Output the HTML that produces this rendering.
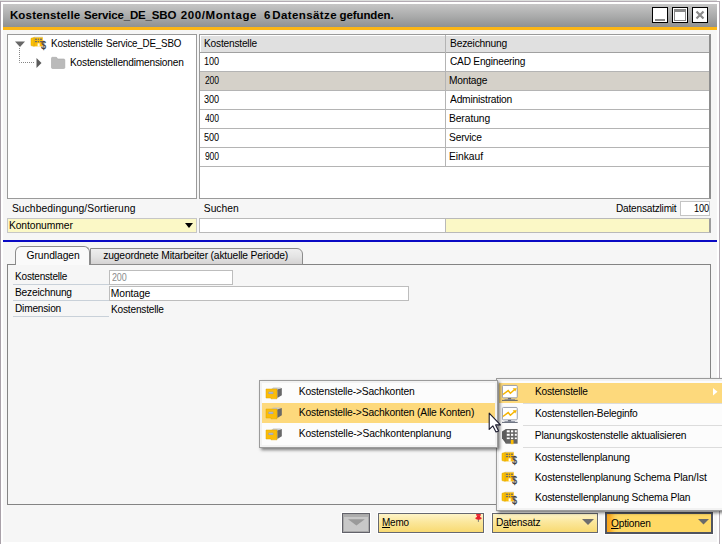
<!DOCTYPE html>
<html lang="de">
<head>
<meta charset="utf-8">
<title>Kostenstelle Service_DE_SBO 200/Montage</title>
<style>
html,body{margin:0;padding:0;}
body{width:722px;height:544px;overflow:hidden;background:#fff;position:relative;
 font-family:"Liberation Sans",sans-serif;font-size:10px;color:#000;}
.a{position:absolute;}
.t{position:absolute;white-space:nowrap;}
#win{left:3px;top:4px;width:714px;height:538px;background:#f6f6f6;}
#tbar{left:3px;top:4px;width:714px;height:23px;background:linear-gradient(#c6c6c6,#a9aaaa 55%,#8f9191);}
#gold{left:3px;top:27px;width:714px;height:3px;background:#fbb616;}
.wb{position:absolute;top:7px;width:14px;height:14px;border:1px solid #000;background:#fff;}
.box{position:absolute;background:#fff;border:1px solid #9a9a9a;box-sizing:border-box;}
.hl{position:absolute;height:1px;background:#b4b4b4;}
.ul{position:absolute;height:1px;background:#c9d1d9;left:13px;width:96px;}
.btn{position:absolute;box-sizing:border-box;border:1px solid #666870;box-shadow:0 0 0 1px rgba(255,255,255,.85);background:linear-gradient(#fef4c8,#fbe79c 45%,#f8da72);}
.menu{position:absolute;box-sizing:border-box;background:#fcfcfc;border:1px solid #9b9b9b;outline:0;box-shadow:inset 0 0 0 2px #f2f2f2, 2px 2px 3px rgba(0,0,0,.5);}
.mhl{position:absolute;background:#fdd97c;}
.sep{position:absolute;height:1px;background:#dcdcdc;}
</style>
</head>
<body>
<!-- outer frame -->
<div class="a" style="left:0;top:0;width:717px;height:1px;background:#dcdedc;"></div>
<div class="a" style="left:0;top:1px;width:720px;height:1px;background:#b3abb3;"></div>
<div class="a" style="left:0;top:1px;width:1px;height:543px;background:#a9a1a9;"></div>
<div class="a" style="left:719px;top:1px;width:1px;height:543px;background:#b3abb3;"></div>
<div class="a" id="win"></div>
<div class="a" id="tbar"></div>
<div class="a" id="gold"></div>


<!-- window buttons -->
<div class="wb" style="left:652px;"><div class="a" style="left:2px;top:11px;width:10px;height:2px;background:#8a8a8a;"></div></div>
<div class="wb" style="left:672px;"><div class="a" style="left:1px;top:1px;width:10px;height:10px;border:1px solid #8a8a8a;border-top:3px solid #8a8a8a;height:8px;"></div></div>
<div class="wb" style="left:692px;"><svg class="a" style="left:0;top:0" width="14" height="14" viewBox="0 0 14 14"><path d="M3.5 3.5 L10.5 10.5 M10.5 3.5 L3.5 10.5" stroke="#8a8a8a" stroke-width="2.2" fill="none"/></svg></div>

<!-- tree panel -->
<div class="box" style="left:7px;top:34px;width:190px;height:165px;"></div>
<svg class="a" style="left:7px;top:34px;" width="190" height="165" viewBox="7 34 190 165">
  <polygon points="15,41.5 25,41.5 20,47" fill="#676767"/>
  <path d="M19.5 48 V62.5 H34" stroke="#858585" stroke-width="1" stroke-dasharray="1 1" fill="none"/>
  <polygon points="36.5,58 41.5,63 36.5,68" fill="#5a5a5a"/>
  <!-- folder -->
  <path d="M51.5 58.2 q0 -0.9 0.9 -0.9 h3.6 q0.9 0 1.2 0.9 l0.3 0.8 h6.3 q1 0 1 1 v7.5 q0 1 -1 1 h-11.3 q-1 0 -1 -1 z" fill="#bababa" stroke="#a6a6a6" stroke-width="0.6"/>
</svg>



<!-- table -->
<div class="box" style="left:199px;top:34px;width:512px;height:165px;border-color:#9a9a9a;border-right:2px solid #8e8e8e;"></div>
<div class="a" style="left:201px;top:36px;width:508px;height:16px;background:#e0e0e0;"></div>
<div class="a" style="left:200px;top:72px;width:509px;height:18px;background:#d5d1c9;"></div>
<div class="hl" style="left:200px;top:52px;width:509px;background:#a0a0a0;"></div>
<div class="hl" style="left:200px;top:71px;width:509px;"></div>
<div class="hl" style="left:200px;top:90px;width:509px;"></div>
<div class="hl" style="left:200px;top:109px;width:509px;"></div>
<div class="hl" style="left:200px;top:128px;width:509px;"></div>
<div class="hl" style="left:200px;top:147px;width:509px;"></div>
<div class="hl" style="left:200px;top:166px;width:509px;"></div>
<div class="a" style="left:445px;top:35px;width:1px;height:131px;background:#b4b4b4;"></div>









<!-- search row -->



<div class="box" style="left:680px;top:201px;width:30px;height:15px;border-color:#c4c4c4;"></div>

<div class="box" style="left:7px;top:218px;width:190px;height:15px;background:#fbf8c6;border-color:#c6c6c6;"></div>

<svg class="a" style="left:185px;top:223px;" width="8" height="5"><polygon points="0,0 8,0 4,5" fill="#000"/></svg>
<div class="box" style="left:199px;top:218px;width:247px;height:15px;border-color:#b9b9b9;"></div>
<div class="box" style="left:445px;top:218px;width:266px;height:15px;background:#fbf8c6;border-color:#b9b9b9;border-right:2px solid #9c9c9c;"></div>

<!-- blue line -->
<div class="a" style="left:3px;top:240px;width:714px;height:2px;background:#0a0ac4;"></div>

<!-- tabs + panel -->
<div class="box" style="left:7px;top:264px;width:704px;height:241px;background:#f6f6f6;border-color:#848484;"></div>
<div class="a" style="left:90px;top:248px;width:213px;height:17px;box-sizing:border-box;border:1px solid #8c8c8c;border-radius:0 6px 0 0;background:linear-gradient(#efefef,#e4e4e4 50%,#d5d3d3);"></div>
<div class="a" style="left:15px;top:246px;width:75px;height:19px;box-sizing:border-box;border:1px solid #8c8c8c;border-bottom:none;border-radius:6px 6px 0 0;background:#fafafa;"></div>






<div class="ul" style="top:284px;"></div>
<div class="ul" style="top:300px;"></div>
<div class="ul" style="top:316px;"></div>
<div class="box" style="left:109px;top:270px;width:124px;height:15px;border-color:#bdbdbd;"></div>
<div class="box" style="left:109px;top:286px;width:300px;height:15px;border-color:#bdbdbd;"></div>




<!-- bottom buttons -->
<div class="a" style="left:342px;top:513px;width:28px;height:20px;box-sizing:border-box;border:1px solid #62626a;background:#c8c8c8;box-shadow:inset 0 0 0 1px #a9a9a9, inset 0 3px 0 0 #adadad, 0 0 0 1px #fff;"></div>
<svg class="a" style="left:348px;top:519px;" width="17" height="7"><polygon points="0,0.2 16.8,0.2 8.4,6.6" fill="#9a9a9a"/></svg>
<div class="btn" style="left:378px;top:513px;width:106px;height:20px;"></div>

<div class="btn" style="left:492px;top:513px;width:106px;height:20px;"></div>

<svg class="a" style="left:582px;top:519px;" width="12" height="6"><polygon points="0,0 12,0 6,6" fill="#6e6e6e"/></svg>
<div class="btn" style="left:605px;top:512px;width:108px;height:22px;border:2px solid #50545f;background:linear-gradient(90deg,#f8a31a 0,#f9ab24 3px,#fdd25b 8px,#ffd965 11px,#ffd965);"></div>

<svg class="a" style="left:698px;top:519px;" width="11" height="6"><polygon points="0,0 11,0 5.5,5.5" fill="#6a6a6a"/></svg>

<!-- right popup menu -->
<div class="menu" style="left:496px;top:378px;width:236px;height:133px;"></div>
<div class="mhl" style="left:499px;top:383px;width:223px;height:20px;"></div>
<div class="sep" style="left:523px;top:403px;width:199px;"></div>
<div class="sep" style="left:523px;top:425px;width:199px;"></div>
<div class="sep" style="left:523px;top:447px;width:199px;"></div>






<svg class="a" style="left:713px;top:388px;" width="5" height="8"><polygon points="0,0 4.5,3.7 0,7.5" fill="#fff"/></svg>

<!-- left popup menu -->
<div class="menu" style="left:259px;top:380px;width:239px;height:68px;"></div>
<div class="mhl" style="left:262px;top:403px;width:233px;height:20px;"></div>




<svg class="a" style="left:31.4px;top:37.3px;overflow:visible" width="17" height="15"><rect x="3" y="-0.2" width="8.8" height="0.7" fill="#b4bccb"/><polygon points="0,1.3 2.9,0.6 2.9,9.3 0,8.6" fill="#ffc200" stroke="#d7a100" stroke-width="0.5"/><rect x="3" y="0.4" width="8.8" height="9" fill="#fbbc05"/><path d="M3.2 0.4 V9.4" stroke="#d7a100" stroke-width="0.5"/><g fill="#5e6372"><rect x="4" y="1.7" width="2.2" height="1.1"/><rect x="7" y="1.7" width="1" height="1.1"/><rect x="8.9" y="1.7" width="2.1" height="1.1"/><rect x="4" y="4.1" width="2.2" height="1.1"/><rect x="7" y="4.1" width="1" height="1.1"/><rect x="8.9" y="4.1" width="2.1" height="1.1"/></g><rect x="6.6" y="6.3" width="2.1" height="3.2" fill="#fffdf0"/><text transform="translate(10.2 12) scale(0.8 1)" font-family="Liberation Sans, sans-serif" font-size="10.6" fill="#404040" stroke="#404040" stroke-width="0.35">$</text></svg>
<svg class="a" style="left:502.2px;top:385.1px;overflow:visible" width="16" height="16"><rect x="0.45" y="0.45" width="14.8" height="12.4" rx="1" fill="#fff" stroke="#8e95a6" stroke-width="0.9"/><rect x="5.9" y="13.2" width="3.2" height="1.4" fill="#4e5565"/><rect x="2.5" y="14.1" width="10.5" height="0.8" fill="#8a90a0"/><rect x="0" y="14.9" width="15.7" height="0.9" fill="#4e5565"/><polyline points="0.9,9.5 6.2,5.6 8.4,8.2 12.6,4.5" fill="none" stroke="#f5b400" stroke-width="1.5" stroke-linejoin="miter"/><polygon points="10.7,3.2 14.8,3.2 13.3,6.6" fill="#f5b400"/></svg>
<svg class="a" style="left:502.2px;top:407.2px;overflow:visible" width="16" height="16"><rect x="0.45" y="0.45" width="14.8" height="12.4" rx="1" fill="#fff" stroke="#8e95a6" stroke-width="0.9"/><rect x="5.9" y="13.2" width="3.2" height="1.4" fill="#4e5565"/><rect x="2.5" y="14.1" width="10.5" height="0.8" fill="#8a90a0"/><rect x="0" y="14.9" width="15.7" height="0.9" fill="#4e5565"/><polyline points="0.9,9.5 6.2,5.6 8.4,8.2 12.6,4.5" fill="none" stroke="#f5b400" stroke-width="1.5" stroke-linejoin="miter"/><polygon points="10.7,3.2 14.8,3.2 13.3,6.6" fill="#f5b400"/></svg>
<svg class="a" style="left:502.2px;top:429.3px;overflow:visible" width="16" height="16"><polygon points="4,0 0,2.4 0,9.3 4,14.7" fill="#5c5c5c"/><rect x="3.8" y="0" width="11.8" height="14.7" fill="#646464"/><g fill="#fff"><rect x="4.8" y="1.3" width="2.9" height="2"/><rect x="9" y="1.3" width="2.2" height="2"/><rect x="12.8" y="1.3" width="2" height="2"/><rect x="4.8" y="4.8" width="2.9" height="2"/><rect x="9" y="4.8" width="2.2" height="2"/><rect x="12.8" y="4.8" width="2" height="2"/><rect x="4.8" y="8.5" width="2.9" height="1.6"/><rect x="9" y="8.5" width="2.2" height="1.6"/><rect x="12.8" y="8.5" width="2" height="1.6"/></g><rect x="8.8" y="10.9" width="2.7" height="4.3" fill="#fbbc05"/></svg>
<svg class="a" style="left:502.2px;top:452.2px;overflow:visible" width="17" height="15"><rect x="3" y="-0.2" width="8.8" height="0.7" fill="#b4bccb"/><polygon points="0,1.3 2.9,0.6 2.9,9.3 0,8.6" fill="#ffc200" stroke="#d7a100" stroke-width="0.5"/><rect x="3" y="0.4" width="8.8" height="9" fill="#fbbc05"/><path d="M3.2 0.4 V9.4" stroke="#d7a100" stroke-width="0.5"/><g fill="#5e6372"><rect x="4" y="1.7" width="2.2" height="1.1"/><rect x="7" y="1.7" width="1" height="1.1"/><rect x="8.9" y="1.7" width="2.1" height="1.1"/><rect x="4" y="4.1" width="2.2" height="1.1"/><rect x="7" y="4.1" width="1" height="1.1"/><rect x="8.9" y="4.1" width="2.1" height="1.1"/></g><rect x="6.6" y="6.3" width="2.1" height="3.2" fill="#fffdf0"/><text transform="translate(10.2 12) scale(0.8 1)" font-family="Liberation Sans, sans-serif" font-size="10.6" fill="#404040" stroke="#404040" stroke-width="0.35">$</text></svg>
<svg class="a" style="left:502.2px;top:472.2px;overflow:visible" width="17" height="15"><rect x="3" y="-0.2" width="8.8" height="0.7" fill="#b4bccb"/><polygon points="0,1.3 2.9,0.6 2.9,9.3 0,8.6" fill="#ffc200" stroke="#d7a100" stroke-width="0.5"/><rect x="3" y="0.4" width="8.8" height="9" fill="#fbbc05"/><path d="M3.2 0.4 V9.4" stroke="#d7a100" stroke-width="0.5"/><g fill="#5e6372"><rect x="4" y="1.7" width="2.2" height="1.1"/><rect x="7" y="1.7" width="1" height="1.1"/><rect x="8.9" y="1.7" width="2.1" height="1.1"/><rect x="4" y="4.1" width="2.2" height="1.1"/><rect x="7" y="4.1" width="1" height="1.1"/><rect x="8.9" y="4.1" width="2.1" height="1.1"/></g><rect x="6.6" y="6.3" width="2.1" height="3.2" fill="#fffdf0"/><text transform="translate(10.2 12) scale(0.8 1)" font-family="Liberation Sans, sans-serif" font-size="10.6" fill="#404040" stroke="#404040" stroke-width="0.35">$</text></svg>
<svg class="a" style="left:502.2px;top:492.2px;overflow:visible" width="17" height="15"><rect x="3" y="-0.2" width="8.8" height="0.7" fill="#b4bccb"/><polygon points="0,1.3 2.9,0.6 2.9,9.3 0,8.6" fill="#ffc200" stroke="#d7a100" stroke-width="0.5"/><rect x="3" y="0.4" width="8.8" height="9" fill="#fbbc05"/><path d="M3.2 0.4 V9.4" stroke="#d7a100" stroke-width="0.5"/><g fill="#5e6372"><rect x="4" y="1.7" width="2.2" height="1.1"/><rect x="7" y="1.7" width="1" height="1.1"/><rect x="8.9" y="1.7" width="2.1" height="1.1"/><rect x="4" y="4.1" width="2.2" height="1.1"/><rect x="7" y="4.1" width="1" height="1.1"/><rect x="8.9" y="4.1" width="2.1" height="1.1"/></g><rect x="6.6" y="6.3" width="2.1" height="3.2" fill="#fffdf0"/><text transform="translate(10.2 12) scale(0.8 1)" font-family="Liberation Sans, sans-serif" font-size="10.6" fill="#404040" stroke="#404040" stroke-width="0.35">$</text></svg>
<svg class="a" style="left:266.1px;top:388.6px;overflow:visible" width="17" height="12"><polygon points="5,0.2 7.3,-1.6 15.3,-1.6 11.2,0.5" fill="#c6c6c6"/><polygon points="11.2,0.6 15.8,-1 15.8,6.2 11.3,8.9" fill="#686868"/><polygon points="0,0 11,0 11,9.8 5,9.8 5,9 0,9" fill="#fbbc09" stroke="#dca400" stroke-width="0.5"/><rect x="2.4" y="2.7" width="4.9" height="2.3" fill="#99a1b1"/><rect x="3" y="3.5" width="3.7" height="0.7" fill="#c9cfdb"/></svg>
<svg class="a" style="left:266.1px;top:409.1px;overflow:visible" width="17" height="12"><polygon points="5,0.2 7.3,-1.6 15.3,-1.6 11.2,0.5" fill="#c6c6c6"/><polygon points="11.2,0.6 15.8,-1 15.8,6.2 11.3,8.9" fill="#686868"/><polygon points="0,0 11,0 11,9.8 5,9.8 5,9 0,9" fill="#fbbc09" stroke="#dca400" stroke-width="0.5"/><rect x="2.4" y="2.7" width="4.9" height="2.3" fill="#99a1b1"/><rect x="3" y="3.5" width="3.7" height="0.7" fill="#c9cfdb"/></svg>
<svg class="a" style="left:266.1px;top:430.3px;overflow:visible" width="17" height="12"><polygon points="5,0.2 7.3,-1.6 15.3,-1.6 11.2,0.5" fill="#c6c6c6"/><polygon points="11.2,0.6 15.8,-1 15.8,6.2 11.3,8.9" fill="#686868"/><polygon points="0,0 11,0 11,9.8 5,9.8 5,9 0,9" fill="#fbbc09" stroke="#dca400" stroke-width="0.5"/><rect x="2.4" y="2.7" width="4.9" height="2.3" fill="#99a1b1"/><rect x="3" y="3.5" width="3.7" height="0.7" fill="#c9cfdb"/></svg>
<svg class="a" style="left:475.2px;top:514.3px;overflow:visible" width="8" height="9"><path d="M3.4 5 V7.9" stroke="#6d6d6d" stroke-width="0.9"/><rect x="1.1" y="0" width="4.8" height="1.7" rx="0.6" fill="#e8212d"/><rect x="1.9" y="1.5" width="3.2" height="1.6" fill="#e8212d"/><path d="M0.3 4.8 Q0.4 2.9 2 2.9 H5 Q6.6 2.9 6.7 4.8 Q5 5.7 3.5 5.7 Q2 5.7 0.3 4.8 Z" fill="#e8212d"/></svg>
<span class="t" style="left:9.9px;top:8px;font-size:11.5px;line-height:14px;letter-spacing:0.17px;font-weight:bold;">Kostenstelle</span>
<span class="t" style="left:83.9px;top:8px;font-size:11.5px;line-height:14px;letter-spacing:-0.16px;font-weight:bold;">Service_DE_SBO</span>
<span class="t" style="left:180.7px;top:8px;font-size:11.5px;line-height:14px;letter-spacing:0.61px;font-weight:bold;">200/Montage</span>
<span class="t" style="left:264.0px;top:8px;font-size:11.5px;line-height:14px;letter-spacing:0.4px;font-weight:bold;">6</span>
<span class="t" style="left:272.3px;top:8px;font-size:11.5px;line-height:14px;letter-spacing:0.39px;font-weight:bold;">Datensätze</span>
<span class="t" style="left:339.6px;top:8px;font-size:11.5px;line-height:14px;letter-spacing:-0.12px;font-weight:bold;">gefunden.</span>
<span class="t" style="left:51.0px;top:38px;font-size:10.3px;line-height:12px;letter-spacing:-0.2px;transform:scaleX(0.960);transform-origin:1.0px 0;">Kostenstelle</span>
<span class="t" style="left:105.7px;top:38px;font-size:10.3px;line-height:12px;letter-spacing:-0.2px;transform:scaleX(0.950);transform-origin:1.0px 0;">Service_DE_SBO</span>
<span class="t" style="left:69.8px;top:57px;font-size:10.3px;line-height:12px;letter-spacing:-0.2px;transform:scaleX(0.984);transform-origin:1.0px 0;">Kostenstellendimensionen</span>
<span class="t" style="left:203.7px;top:38px;font-size:10.3px;line-height:12px;letter-spacing:-0.2px;transform:scaleX(0.985);transform-origin:1.0px 0;">Kostenstelle</span>
<span class="t" style="left:449.9px;top:38px;font-size:10.3px;line-height:12px;letter-spacing:-0.2px;transform:scaleX(0.996);transform-origin:1.0px 0;">Bezeichnung</span>
<span class="t" style="left:203.6px;top:56px;font-size:10.3px;line-height:12px;letter-spacing:-0.2px;transform:scaleX(0.885);transform-origin:1.0px 0;">100</span>
<span class="t" style="left:449.9px;top:56px;font-size:10.3px;line-height:12px;letter-spacing:-0.2px;transform:scaleX(0.982);transform-origin:0.0px 0;">CAD Engineering</span>
<span class="t" style="left:204.6px;top:75px;font-size:10.3px;line-height:12px;letter-spacing:-0.2px;transform:scaleX(0.831);transform-origin:0.0px 0;">200</span>
<span class="t" style="left:448.9px;top:75px;font-size:10.3px;line-height:12px;letter-spacing:-0.2px;transform:scaleX(0.989);transform-origin:1.0px 0;">Montage</span>
<span class="t" style="left:203.6px;top:94px;font-size:10.3px;line-height:12px;letter-spacing:-0.2px;transform:scaleX(0.885);transform-origin:1.0px 0;">300</span>
<span class="t" style="left:449.9px;top:94px;font-size:10.3px;line-height:12px;letter-spacing:-0.2px;transform:scaleX(0.994);transform-origin:0.0px 0;">Administration</span>
<span class="t" style="left:204.6px;top:113px;font-size:10.3px;line-height:12px;letter-spacing:-0.2px;transform:scaleX(0.831);transform-origin:0.0px 0;">400</span>
<span class="t" style="left:448.9px;top:113px;font-size:10.3px;line-height:12px;letter-spacing:-0.06px;">Beratung</span>
<span class="t" style="left:203.6px;top:132px;font-size:10.3px;line-height:12px;letter-spacing:-0.2px;transform:scaleX(0.885);transform-origin:1.0px 0;">500</span>
<span class="t" style="left:448.9px;top:132px;font-size:10.3px;line-height:12px;letter-spacing:-0.2px;transform:scaleX(0.994);transform-origin:1.0px 0;">Service</span>
<span class="t" style="left:204.6px;top:151px;font-size:10.3px;line-height:12px;letter-spacing:-0.2px;transform:scaleX(0.831);transform-origin:0.0px 0;">900</span>
<span class="t" style="left:448.9px;top:151px;font-size:10.3px;line-height:12px;letter-spacing:-0.02px;">Einkauf</span>
<span class="t" style="left:11.9px;top:203px;font-size:10.3px;line-height:12px;letter-spacing:0.07px;">Suchbedingung/Sortierung</span>
<span class="t" style="left:203.8px;top:203px;font-size:10.3px;line-height:12px;letter-spacing:-0.02px;">Suchen</span>
<span class="t" style="left:615.8px;top:203px;font-size:10.3px;line-height:12px;letter-spacing:-0.2px;transform:scaleX(0.977);transform-origin:1.0px 0;">Datensatzlimit</span>
<span class="t" style="left:693.9px;top:203px;font-size:10.3px;line-height:12px;letter-spacing:-0.2px;transform:scaleX(0.897);transform-origin:1.0px 0;">100</span>
<span class="t" style="left:8.9px;top:220px;font-size:10.3px;line-height:12px;letter-spacing:-0.07px;">Kontonummer</span>
<span class="t" style="left:26.6px;top:250px;font-size:10.3px;line-height:12px;letter-spacing:-0.08px;">Grundlagen</span>
<span class="t" style="left:103.3px;top:250px;font-size:10.3px;line-height:12px;letter-spacing:-0.18px;">zugeordnete Mitarbeiter (aktuelle Periode)</span>
<span class="t" style="left:14.9px;top:271px;font-size:10.3px;line-height:12px;letter-spacing:-0.2px;transform:scaleX(0.972);transform-origin:1.0px 0;">Kostenstelle</span>
<span class="t" style="left:14.9px;top:287px;font-size:10.3px;line-height:12px;letter-spacing:-0.2px;transform:scaleX(0.991);transform-origin:1.0px 0;">Bezeichnung</span>
<span class="t" style="left:14.9px;top:303px;font-size:10.3px;line-height:12px;letter-spacing:-0.2px;transform:scaleX(0.982);transform-origin:1.0px 0;">Dimension</span>
<span class="t" style="left:111.8px;top:272px;font-size:10.3px;line-height:12px;letter-spacing:-0.2px;transform:scaleX(0.873);transform-origin:0.0px 0;color:#8c8c8c;">200</span>
<span class="t" style="left:110.8px;top:288px;font-size:10.3px;line-height:12px;letter-spacing:-0.1px;">Montage</span>
<span class="t" style="left:110.8px;top:304px;font-size:10.3px;line-height:12px;letter-spacing:-0.2px;transform:scaleX(0.983);transform-origin:1.0px 0;">Kostenstelle</span>
<span class="t" style="left:382.0px;top:517px;font-size:10.3px;line-height:12px;letter-spacing:-0.2px;transform:scaleX(0.962);transform-origin:1.0px 0;"><u>M</u>emo</span>
<span class="t" style="left:496.2px;top:517px;font-size:10.3px;line-height:12px;letter-spacing:-0.2px;transform:scaleX(0.995);transform-origin:1.0px 0;">D<u>a</u>tensatz</span>
<span class="t" style="left:611.4px;top:518px;font-size:10.3px;line-height:12px;letter-spacing:-0.2px;transform:scaleX(0.985);transform-origin:0.0px 0;"><u>O</u>ptionen</span>
<span class="t" style="left:534.8px;top:386px;font-size:10.3px;line-height:12px;letter-spacing:-0.2px;transform:scaleX(0.981);transform-origin:1.0px 0;">Kostenstelle</span>
<span class="t" style="left:534.8px;top:408px;font-size:10.3px;line-height:12px;letter-spacing:-0.2px;transform:scaleX(0.990);transform-origin:1.0px 0;">Kostenstellen-Beleginfo</span>
<span class="t" style="left:534.8px;top:430px;font-size:10.3px;line-height:12px;letter-spacing:-0.19px;">Planungskostenstelle aktualisieren</span>
<span class="t" style="left:534.8px;top:452px;font-size:10.3px;line-height:12px;letter-spacing:-0.17px;">Kostenstellenplanung</span>
<span class="t" style="left:534.8px;top:472px;font-size:10.3px;line-height:12px;letter-spacing:-0.12px;">Kostenstellenplanung Schema Plan/Ist</span>
<span class="t" style="left:534.8px;top:492px;font-size:10.3px;line-height:12px;letter-spacing:-0.2px;transform:scaleX(0.994);transform-origin:1.0px 0;">Kostenstellenplanung Schema Plan</span>
<span class="t" style="left:298.7px;top:386px;font-size:10.3px;line-height:12px;letter-spacing:-0.17px;">Kostenstelle-&gt;Sachkonten</span>
<span class="t" style="left:298.7px;top:407px;font-size:10.3px;line-height:12px;letter-spacing:-0.18px;">Kostenstelle-&gt;Sachkonten (Alle Konten)</span>
<span class="t" style="left:298.7px;top:428px;font-size:10.3px;line-height:12px;letter-spacing:-0.13px;">Kostenstelle-&gt;Sachkontenplanung</span>
<!-- cursor -->
<svg class="a" style="left:488px;top:412px;" width="14" height="21" viewBox="0 0 14 21"><path d="M1.2 1.2 V17.4 L4.9 13.9 L8 20 L10.6 18.9 L7.6 12.9 H12.4 Z" fill="#fff" stroke="#1b1b2e" stroke-width="1.1" stroke-linejoin="round"/></svg>
</body>
</html>
